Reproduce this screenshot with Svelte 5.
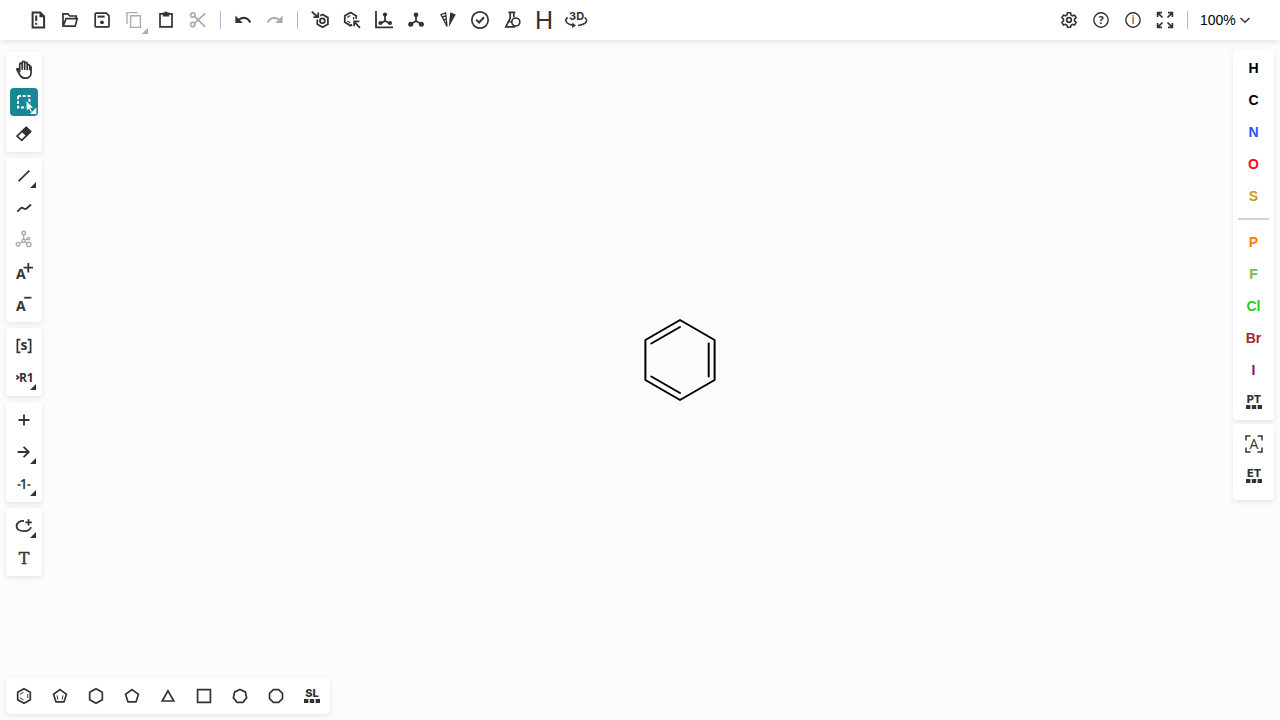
<script>
  // Points of a regular polygon; the first vertex points up unless turned.
  function ring(n, r, cx = 14, cy = 14, turn = 0) {
    return Array.from({ length: n }, (_, i) => {
      const a = (Math.PI * 2 * i) / n - Math.PI / 2 + turn;
      return `${(cx + r * Math.cos(a)).toFixed(2)},${(cy + r * Math.sin(a)).toFixed(2)}`;
    }).join(' ');
  }

  const more = '<path class="solid" d="M26 20v6h-6z"/>';
  const squares = '<path class="solid" d="M6 17h4.400v4H6zM11.800 17h4.400v4h-4.400zM17.600 17H22v4h-4.400z"/>';
  const caption = (t) => `<text x="14" y="15" class="caption">${t}</text>${squares}`;

  const icons = {
    new: '<path stroke-width="2" d="M8.6 6.6h7.6l3.9 3.9v11.1H8.6z"/><path class="solid" d="M15.5 5.8l5.4 5.4h-5.4z"/><path stroke-width="2" d="M12.2 9.5V15M12.2 16.8v2"/>',
    open: '<path d="M7 20V7.8h4.8l2 2.2h6.4v2.4M7.2 20.2l2.8-7.6h11.2l-2 7.6z"/>',
    save: '<path d="M8.2 7.2h10.2l2.6 2.6v10.1a1 1 0 0 1-1 1H8.2a1 1 0 0 1-1-1V8.2a1 1 0 0 1 1-1z"/><path stroke-width="2" d="M9.6 10.6h7"/><circle class="solid" cx="14" cy="16.3" r="1.9"/>',
    copy: '<path stroke-width="1.4" d="M7 18V6.6h10.8M10.6 9.8h9.8v11.6h-9.8z"/><path class="solid" d="M28 22v6h-6z"/><path class="solid" d="M28 22v6h-6z"/>',
    paste: '<path d="M8 7.800h12v13H8z"/><path class="solid" d="M10.800 6.600h1.600a1.700 1.700 0 0 1 3.200 0h1.600v4h-6.400z"/>',
    cut: '<circle cx="8.8" cy="9" r="2.2"/><circle cx="8.8" cy="18.6" r="2.2"/><path stroke-width="1.8" d="M10.6 10.4L21.2 20.8M10.6 17.2L21.2 7.4"/>',
    undo: '<path class="solid" d="M6.4 9.6v7.4h7.4z"/><path stroke-width="2" d="M9 14.4c4-4 10.200-3.200 12.200 2.300"/>',
    redo: '<path class="solid" d="M21.600 9.600v7.400h-7.400z"/><path stroke-width="2" d="M19 14.400c-4-4-10.200-3.200-12.200 2.300"/>',
    arom: '<path stroke-width="1.800" d="M5.800 5.600l5.800 5.400M7.400 11.200h4.800V6.600M14.200 9.800l2.400-1.300 5.300 3.100v6.600l-5.300 3-5.300-3v-4.600"/><circle cx="16.400" cy="14.800" r="2.400" stroke-width="1.800"/>',
    dearom: '<path stroke-width="1.800" d="M18.200 12.800V9.800L12.400 6.500 6.800 9.800v6.500l5.600 3.300 1.800-1"/><path stroke-width="1.200" d="M9.200 11.400l3-1.800M9.400 15.200l2.800 1.600M15.600 11v2.400"/><path stroke-width="1.800" d="M22 21.800l-5.600-6M16.200 20.200v-4.800h5.200"/>',
    layout: '<path stroke-width="1.800" d="M6 5v16.400h17M15 9v5.700l-4.600 3M15 14.700l4.800 3"/><circle class="solid" cx="15" cy="8.600" r="2.100"/><circle class="solid" cx="10.400" cy="17" r="2"/><circle class="solid" cx="20" cy="17" r="2"/>',
    clean: '<path stroke-width="1.800" d="M14 9v6l-5.200 3M14 15l5.400 3"/><circle class="solid" cx="14" cy="8.800" r="2.400"/><circle class="solid" cx="8.700" cy="18.200" r="2.500"/><circle class="solid" cx="19.400" cy="18.200" r="2.500"/>',
    cip: '<path stroke-width="1.300" d="M7 8.600l4.600-1.800L13 20.400zM8.400 10.800l3.200-.8M9.800 13.600l2-.5"/><path class="solid" d="M16.200 6.200l5.600 2.300-7 12.500z"/>',
    check: '<circle cx="14" cy="14" r="8.200"/><path stroke-width="2" d="M10.200 13.600l2.900 2.900 4.900-5.300"/>',
    analyse: '<path d="M10.400 6.400h7M12.200 6.600v5.600l-4.400 8.600h9.400M15.800 6.600v4.600"/><circle cx="17.800" cy="16" r="4"/><path stroke-width="1.300" d="M11 15.800h3"/>',
    hydrogens: '<text x="14" y="23" class="hydrogen">H</text>',
    view3d: '<text x="14.600" y="14" class="three">3D</text><path stroke-width="1.500" d="M5.600 11.400c-3.400 2.800-2 6.600 5.600 7.900M22.600 11.400c4.200 3.200 1.600 7-6.600 8"/><path class="solid" d="M10.400 16.600l3.600 3-4 2.300z"/>',
    settings: '<path stroke-width="1.600" d="M12.500 6.800h3l.5 2.100 1.500.9 2.100-.7 1.500 2.600-1.600 1.500v1.700l1.600 1.500-1.500 2.600-2.100-.7-1.500.9-.5 2.100h-3l-.5-2.100-1.500-.9-2.100.7-1.500-2.600 1.600-1.500v-1.700l-1.600-1.500 1.500-2.600 2.100.7 1.500-.9z"/><circle cx="14" cy="14" r="2.300"/>',
    help: '<circle cx="14" cy="14" r="7.200" stroke-width="1.400"/><text x="14" y="18" class="mark">?</text>',
    about: '<circle cx="14" cy="14" r="7.200" stroke-width="1.400"/><text x="14" y="18" class="info">i</text>',
    full: '<path d="M6.600 11V6.600H11M17 6.600h4.400V11M21.400 17v4.400H17M11 21.400H6.600V17M6.800 6.800l4.700 4.700M21.200 6.800l-4.700 4.700M21.200 21.200l-4.700-4.700M6.800 21.200l4.700-4.700"/>',
    hand: '<path stroke-linejoin="round" stroke-linecap="round" stroke-width="1.700" d="M9.700 15.600V8.400a1.250 1.250 0 0 1 2.500 0V6.600a1.250 1.250 0 0 1 2.500 0v1a1.250 1.250 0 0 1 2.500 0v2.200a1.250 1.250 0 0 1 2.500.2c1.200 0 1.400.6 1.400 1.400v4.800c0 3.800-2.400 6-5.800 6-3.200 0-4.800-1.800-6-4.200l-2.500-4.600c.5-1.200 1.800-.7 2.900 1.200M12.200 8.400v4.800M14.700 7.600v5.600M17.200 9.800v3.600M19.700 10.400v3"/>',
    select: '<path stroke-width="2" stroke-dasharray="3 1.700" d="M8 8h11.400v11.400H8z"/><path class="solid cursor" d="M15.800 12.400l8.400 7.400-3.400.3 1.700 3.400-1.900.9-1.700-3.400-2.500 2.200z"/><path class="solid" d="M26.400 19.600V26H20z"/>',
    erase: '<path d="M16.200 7.400l4.400 4.200-8.800 8.800-4.800-4.200z" stroke-linejoin="round"/><path class="solid" d="M16.200 6.600l5.300 5-5 4.900-5.300-5z"/>',
    bond: '<path d="M8.600 19.200L19.400 8.600"/>' + more,
    chain: '<path stroke-width="1.800" d="M7.200 17.600l3.400-3.300q1-.9 2.200-.3l1.600.8q1.200.4 2.200-.3l4.400-4"/>',
    branch: '<path stroke-width="1.400" d="M13.700 8.600v4.800M12.200 15.600l-2.600 1.500M15.200 15.800l1.800 1.300M15.100 14l2-.9"/><circle cx="13.700" cy="7" r="1.800" stroke-width="1.400"/><circle cx="13.700" cy="14.900" r="1.600" stroke-width="1.400"/><circle cx="8" cy="18.200" r="1.800" stroke-width="1.400"/><circle cx="18.800" cy="18.400" r="2.200" stroke-width="1.400"/><circle cx="18.400" cy="12.600" r="1.200" stroke-width="1.400"/>',
    plusCharge: '<text x="10.800" y="21" class="charge">A</text><path stroke-width="1.800" d="M18.300 5v9.400M13.600 9.700H23"/>',
    minusCharge: '<text x="10.800" y="21" class="charge">A</text><path stroke-width="1.800" d="M14.200 7.700h7.200"/>',
    sgroup: '<text x="14" y="18" class="charge">s</text><path d="M10.400 7.600H7.400v12.800h3M17.600 7.600h3v12.800h-3"/>',
    rgroup: '<text x="16.300" y="18" class="rgroup">R1</text><path stroke-width="1.700" d="M6.400 11.400l2.200 2-2.200 2"/>' + more,
    plus: '<path stroke-width="1.800" d="M14 8.500v11M8.500 14h11"/>',
    arrow: '<path stroke-width="1.800" d="M7.600 14h11.200M13.600 8.800l5.200 5.200-5.200 5.200"/>' + more,
    mapping: '<text x="13.500" y="19" class="mapping">1</text><path d="M7.600 15h3M17.400 15h3"/>' + more,
    shape: '<path stroke-width="1.800" d="M14 9c-4.200-.3-7.400 2-7.400 5.200 0 3 3.200 4.900 7.200 4.900 3.600 0 6.600-1.500 7.200-4"/><path stroke-width="1.800" d="M18.600 7.200v6.400M15.400 10.400h6.400"/>' + more,
    text: '<text x="14" y="20" class="serif">T</text>',
    benzene: `<polygon points="${ring(6, 7.3)}"/><path stroke-width="1" d="M10 12.400l3.600-2.200M10 15.800l3.600 2.200M17.800 12v4"/>`,
    cyclopentadiene: `<polygon points="${ring(5, 6.8, 14, 14.4)}"/><path stroke-width="1" d="M11 13.400l.9 4.200M17 13.400l-.9 4.200"/>`,
    hexane: `<polygon points="${ring(6, 7.3)}"/>`,
    pentane: `<polygon points="${ring(5, 6.8, 14, 14.4)}"/>`,
    propane: '<polygon points="14,8.800 19.800,19 8.200,19"/>',
    butane: '<path d="M7.600 7.600h12.800v12.800H7.600z"/>',
    heptane: `<polygon points="${ring(7, 6.8, 14, 14.200)}"/>`,
    octane: `<polygon points="${ring(8, 7, 14, 14, Math.PI / 8)}"/>`,
    library: caption('SL'),
    periodic: caption('PT'),
    extended: caption('ET'),
    any: '<path stroke-width="1.500" d="M6 10.500V6h4.500M17.500 6H22v4.500M22 17.500V22h-4.500M10.500 22H6v-4.500"/><text x="14" y="19" class="any">A</text>'
  };

  const topGroups = [
    [['new', 'Clear canvas'], ['open', 'Open'], ['save', 'Save as'], ['copy', 'Copy', true], ['paste', 'Paste'], ['cut', 'Cut', true]],
    [['undo', 'Undo'], ['redo', 'Redo', true]],
    [['arom', 'Aromatize'], ['dearom', 'Dearomatize'], ['layout', 'Layout'], ['clean', 'Clean up'], ['cip', 'Calculate CIP'], ['check', 'Check structure'], ['analyse', 'Calculated values'], ['hydrogens', 'Explicit hydrogens'], ['view3d', '3D viewer']]
  ];
  const systemTools = [['settings', 'Settings'], ['help', 'Help'], ['about', 'About'], ['full', 'Fullscreen mode']];
  const leftGroups = [
    [['hand', 'Hand tool'], ['select', 'Rectangle selection'], ['erase', 'Erase']],
    [['bond', 'Single bond'], ['chain', 'Chain'], ['branch', 'Stereochemistry', true], ['plusCharge', 'Charge plus'], ['minusCharge', 'Charge minus']],
    [['sgroup', 'S-group'], ['rgroup', 'R-group']],
    [['plus', 'Reaction plus'], ['arrow', 'Reaction arrow'], ['mapping', 'Reaction mapping']],
    [['shape', 'Shape ellipse'], ['text', 'Add text']]
  ];
  const templates = [['benzene', 'Benzene'], ['cyclopentadiene', 'Cyclopentadiene'], ['hexane', 'Cyclohexane'], ['pentane', 'Cyclopentane'], ['propane', 'Cyclopropane'], ['butane', 'Cyclobutane'], ['heptane', 'Cycloheptane'], ['octane', 'Cyclooctane'], ['library', 'Structure library']];
  const atoms = [
    [['H', '#000000'], ['C', '#000000'], ['N', '#304ff7'], ['O', '#ff0d0d'], ['S', '#c99a19']],
    [['P', '#ff8000'], ['F', '#78bc42'], ['Cl', '#1fd01f'], ['Br', '#a62929'], ['I', '#940094']]
  ];

  let active = $state('select');
  let zoom = $state('100%');
</script>

{#snippet tool([id, label, disabled])}
  <button type="button" class="tool" class:active={active === id} aria-label={label} title={label} {disabled} onclick={() => (active = id)}>
    <svg viewBox="0 0 28 28" aria-hidden="true">{@html icons[id]}</svg>
  </button>
{/snippet}

<div class="editor">
  <header>
    {#each topGroups as group, i}
      {#if i > 0}<span class="rule"></span>{/if}
      {#each group as item}{@render tool(item)}{/each}
    {/each}
    <span class="spacer"></span>
    {#each systemTools as item}{@render tool(item)}{/each}
    <span class="rule"></span>
    <label class="zoom">
      <select bind:value={zoom} aria-label="Zoom">
        {#each ['50%', '75%', '100%', '150%', '200%'] as level}<option>{level}</option>{/each}
      </select>
      <svg viewBox="0 0 12 12" aria-hidden="true"><path d="M1.500 4L6 8.200 10.500 4" /></svg>
    </label>
  </header>

  <main>
    <svg class="molecule" viewBox="-40 -45 80 90" role="img" aria-label="Benzene ring">
      <path d="M0-40L34.600-20V20L0 40-34.600 20V-20zM-28.700-16.500L0-33M-28.700 16.500L0 33M28.700-16.500V16.500" />
    </svg>

    <nav class="left" aria-label="Drawing tools">
      {#each leftGroups as group}
        <div class="panel">{#each group as item}{@render tool(item)}{/each}</div>
      {/each}
    </nav>

    <aside aria-label="Atoms">
      <div class="panel atoms">
        {#each atoms as row, i}
          {#if i > 0}<hr />{/if}
          {#each row as [symbol, color]}
            <button type="button" class="tool atom" style:color>{symbol}</button>
          {/each}
        {/each}
        {@render tool(['periodic', 'Periodic table'])}
      </div>
      <div class="panel atoms extra">
        {@render tool(['any', 'Any atom'])}
        {@render tool(['extended', 'Extended table'])}
      </div>
    </aside>
  </main>

  <footer>
    <div class="panel templates">{#each templates as item}{@render tool(item)}{/each}</div>
  </footer>
</div>

<style>
  :global(body) { margin: 0; }
  .editor {
    position: relative;
    display: flex;
    flex-direction: column;
    min-height: 100vh;
    background: #fcfcfc;
    color: #333;
    font-family: "Liberation Sans", Arial, sans-serif;
  }
  header {
    display: flex;
    align-items: center;
    gap: 4px;
    height: 40px;
    padding: 0 29px 0 24px;
    background: #fff;
    box-shadow: 0 2px 5px rgba(103, 104, 132, 0.15);
  }
  .spacer { flex: 1; }
  .rule {
    width: 1px;
    height: 18px;
    margin: 0 4px;
    background: #b4b9d6;
  }
  .tool {
    flex: none;
    box-sizing: border-box;
    width: 28px;
    height: 28px;
    padding: 0;
    border: 0;
    border-radius: 4px;
    background: none;
    color: #333;
    font: inherit;
  }
  .tool:disabled { opacity: 0.4; }
  .tool.active { background: #188794; color: #fff; }
  .tool svg {
    display: block;
    width: 28px;
    height: 28px;
    fill: none;
    stroke: currentColor;
    stroke-width: 1.7;
  }
  .tool :global(.solid) { fill: currentColor; stroke: none; }
  .tool :global(.cursor) { stroke: #188794; stroke-width: 1; }
  .tool :global(text) {
    fill: currentColor;
    stroke: none;
    text-anchor: middle;
    font-family: "Open Sans", sans-serif;
    font-weight: 700;
  }
  .tool :global(text.caption) { font-family: Inter, sans-serif; font-size: 11px; font-weight: 800; }
  .tool :global(text.hydrogen) { font-family: "Liberation Sans", sans-serif; font-size: 25px; font-weight: 400; }
  .tool :global(text.three) { font-family: Inter, sans-serif; font-size: 11px; }
  .tool :global(text.mark) { font-size: 11px; }
  .tool :global(text.info) { font-size: 12px; font-weight: 400; }
  .tool :global(text.charge) { font-size: 14px; }
  .tool :global(text.rgroup) { font-size: 12px; }
  .tool :global(text.mapping) { font-size: 14px; font-weight: 600; }
  .tool :global(text.serif) { font-family: "DejaVu Serif", serif; font-size: 16px; font-weight: 400; stroke: currentColor; stroke-width: 0.4; }
  .tool :global(text.any) { font-size: 14px; font-weight: 400; }
  .zoom {
    display: flex;
    align-items: center;
    gap: 3px;
    margin-left: 4px;
    color: #000;
  }
  .zoom select {
    appearance: none;
    padding: 0;
    border: 0;
    background: none;
    color: inherit;
    font: inherit;
    font-size: 14px;
    line-height: 20px;
  }
  .zoom svg {
    width: 12px;
    height: 12px;
    fill: none;
    stroke: #333;
    stroke-width: 1.5;
  }
  main {
    flex: 1;
    display: flex;
    justify-content: space-between;
    align-items: flex-start;
    padding: 10px 6px 0;
  }
  .molecule {
    position: absolute;
    top: calc(50% - 45px);
    left: 50%;
    width: 80px;
    height: 90px;
    fill: none;
    stroke: #000;
    stroke-width: 2;
    stroke-linecap: round;
    stroke-linejoin: round;
  }
  .left {
    display: flex;
    flex-direction: column;
    gap: 6px;
    padding-top: 2px;
  }
  .panel {
    display: flex;
    flex-direction: column;
    gap: 4px;
    padding: 4px;
    border-radius: 4px;
    background: #fff;
    box-shadow: 0 2px 5px rgba(103, 104, 132, 0.15);
  }
  aside {
    display: flex;
    flex-direction: column;
    gap: 4px;
  }
  .atoms { padding: 4px 6px 4px 7px; }
  .extra { padding-top: 6px; padding-bottom: 10px; }
  .atom { width: 27px; font-size: 14px; font-weight: 700; }
  hr {
    align-self: stretch;
    height: 2px;
    margin: 4px -1px 4px -2px;
    border: 0;
    background: #cad3dd;
  }
  footer {
    display: flex;
    padding: 0 6px 6px;
  }
  .templates { flex-direction: row; gap: 8px; }
</style>
